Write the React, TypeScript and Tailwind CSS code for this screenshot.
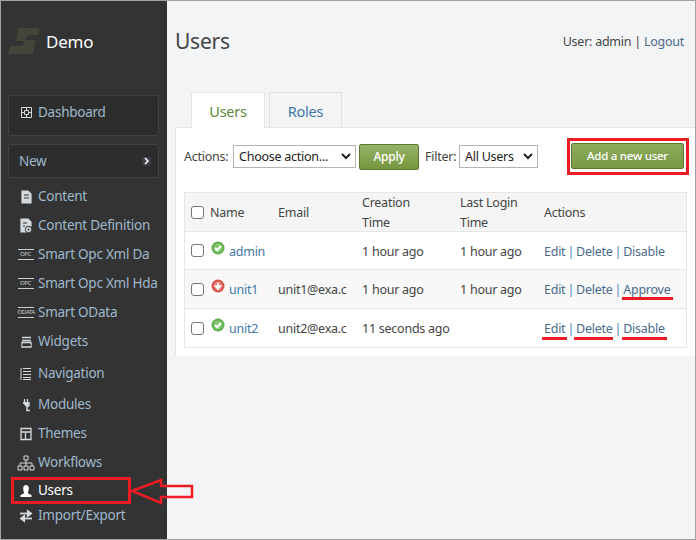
import { ReactNode } from 'react';

const Ico = ({ children }: { children: ReactNode }) => (
  <svg width="18" height="16" viewBox="0 0 18 16" fill="none" stroke="#d5dade" strokeWidth="1.2" className="shrink-0">
    {children}
  </svg>
);

const TagIcon = ({ label }: { label: string }) => (
  <span className="w-[16px] shrink-0 border-y border-[#c8ced2] text-[#c8ced2] text-[6px] leading-[9px] text-center whitespace-nowrap tracking-[-0.4px]">
    {label}
  </span>
);

const menu = [
  { label: 'Content', h: 'h-[29px]', icon: <Ico><path d="M5 2h6l3 3v9H5z" fill="#d5dade" /><path d="M7 6h5M7 9h5" stroke="#333" /></Ico> },
  { label: 'Content Definition', h: 'h-[29px]', icon: <Ico><path d="M4 1h7l3 3v4H9v6H4z" fill="#d5dade" /><circle cx="11.500" cy="11.500" r="3.200" fill="#d5dade" stroke="#333" strokeWidth="1" /><circle cx="11.500" cy="11.500" r="1" fill="#333" stroke="none" /><path d="M6 5h4M6 8h2" stroke="#333" /></Ico> },
  { label: 'Smart Opc Xml Da', h: 'h-[29px]', icon: <TagIcon label="OPC" /> },
  { label: 'Smart Opc Xml Hda', h: 'h-[29px]', icon: <TagIcon label="OPC" /> },
  { label: 'Smart OData', h: 'h-[29px]', icon: <TagIcon label="ODATA" /> },
  { label: 'Widgets', h: 'h-[29px]', icon: <Ico><path d="M5 3.500h9M5 6.500h9M5 8.500h9v4.500H5z" strokeWidth="1.300" /><path d="M5 11h9" stroke="#333" /></Ico> },
  { label: 'Navigation', h: 'h-[29px] mt-[3px]', icon: <Ico><path d="M4 2v12M6 2.500h8M6 5.500h8M6 8.500h8M6 11.500h8M6 13.500h8" strokeWidth="1" /></Ico> },
  { label: 'Modules', h: 'h-[29px] mt-[2px]', icon: <Ico><path d="M7.500 2v4M10.500 2v4" strokeWidth="1.300" /><path d="M6 6h6v2.500l-2 1.500v3.500h3" strokeWidth="1.500" /><path d="M7 6h4v3H9z" fill="#d5dade" /></Ico> },
  { label: 'Themes', h: 'h-[29px]', icon: <Ico><path d="M4 2.500h10v11H4zM4 6h10M8.500 6v7.500" strokeWidth="1.300" /></Ico> },
  { label: 'Workflows', h: 'h-[29px]', icon: <Ico><path d="M7 1h4v4H7zM1 11h4v4H1zM7 11h4v4H7zM13 11h4v4h-4zM9 5v6M3 11V8h12v3" strokeWidth="1" /></Ico> },
  { label: 'Users', h: 'h-[27px]', active: true, icon: <svg width="18" height="16" viewBox="0 0 18 16" className="shrink-0"><path d="M9 2c1.800 0 2.800 1.500 2.800 3.500S11 9 11 10.500l3.500 1.500v2h-11v-2L7 10.500C7 9 6.200 7.500 6.200 5.500S7.200 2 9 2z" fill="#fff" /></svg> },
  { label: 'Import/Export', h: 'h-[25px] -mt-[1px]', icon: <Ico><path d="M3 5.500h9" strokeWidth="1.800" /><path d="M10.500 2.500l4 3-4 3z" fill="#d5dade" /><path d="M15 10.500H6" strokeWidth="1.800" /><path d="M7.500 7.500l-4 3 4 3z" fill="#d5dade" /></Ico> },
];

const StatusIcon = ({ ok }: { ok: boolean }) => (
  <svg width="14" height="14" viewBox="0 0 14 14" className="shrink-0 -mt-[6px]">
    <circle cx="7" cy="7" r="6.500" fill={ok ? '#5fae4c' : '#d9534a'} />
    <circle cx="7" cy="7" r="4.500" fill={ok ? '#86c873' : '#ea8079'} />
    {ok ? (
      <path d="M4 7l2.200 2.200L10 5" stroke="#fff" strokeWidth="2" fill="none" />
    ) : (
      <path d="M7 3.500v4M4.500 7L7 10l2.500-3z" stroke="#fff" strokeWidth="1.600" fill="#fff" />
    )}
  </svg>
);

const Check = () => (
  <span className="w-[13px] h-[13px] shrink-0 rounded-[3px] border border-[#767676] bg-white" />
);

const Select = ({ label, w }: { label: string; w: string }) => (
  <div className={`${w} h-[23px] border border-[#b5b5b5] bg-white flex items-center justify-between pl-[5px] pr-[4px] text-[#222]`}>
    <span className="pt-[2px]">{label}</span>
    <svg width="10" height="7" viewBox="0 0 10 7"><path d="M1 1l4 4 4-4" stroke="#222" strokeWidth="2" fill="none" /></svg>
  </div>
);

const rows = [
  { name: 'admin', email: '', created: '1 hour ago', login: '1 hour ago', ok: true, last: 'Disable', h: 'h-[38px]', pad: 'pt-[4px]', bg: 'bg-white' },
  { name: 'unit1', email: 'unit1@exa.c', created: '1 hour ago', login: '1 hour ago', ok: false, last: 'Approve', h: 'h-[39px]', pad: 'pt-[2px]', bg: 'bg-[#f8f8f8]' },
  { name: 'unit2', email: 'unit2@exa.c', created: '11 seconds ago', login: '', ok: true, last: 'Disable', h: 'h-[38px]', pad: 'pt-[2px]', bg: 'bg-white' },
];

const Mark = ({ className }: { className: string }) => <div className={`absolute bg-[#ed1c24] h-[3px] ${className}`} />;

export default function App() {
  return (
    <div className="relative w-[696px] h-[540px] overflow-hidden flex border border-[#a3a3a3] bg-[#f3f4f6] text-[13.5px] tracking-[-0.25px] text-[#444] font-['Noto_Sans','Open_Sans',sans-serif]">
      {/* Sidebar */}
      <aside className="w-[166px] shrink-0 bg-[#333333] flex flex-col pl-[7px] pr-[8px]">
        <div className="h-[94px] pt-[27px] flex items-start">
          <svg width="33" height="27" viewBox="0 0 33 27" className="shrink-0">
            <path d="M10 0h22l-2 7H20l-3 5h11l-3 14H0l2-8h12l3-5H8z" fill="#44443a" />
          </svg>
          <span className="ml-[5px] mt-[1px] text-[17px] leading-[26px] text-white">Demo</span>
        </div>
        <div className="h-[41px] rounded-[2px] border border-[#414141] bg-[#2d2d2d] flex items-center pl-[12px] pb-[7px] text-[#9fb8cc]">
          <svg width="11" height="11" viewBox="0 0 11 11" fill="none" stroke="#d5dade" className="shrink-0"><path d="M.5.5h10v10H.5zM.5 5.500h3M7 5.500h3.500M5.500.5v3M5.500 7v3.500M3.500 3.500h4v4h-4z" /></svg>
          <span className="ml-[6px]">Dashboard</span>
        </div>
        <div className="mt-[8px] h-[34px] rounded-[2px] border border-[#414141] bg-[#2d2d2d] flex items-center justify-between pl-[10px] pr-[7px] text-[#9fb8cc]">
          <span className="pt-[1px]">New</span>
          <span className="w-[9px] h-[9px] rounded-[2px] bg-[#3d3d48] flex items-center justify-center">
            <svg width="6" height="8" viewBox="0 0 6 8"><path d="M1 1l3 3-3 3" stroke="#fff" strokeWidth="1.500" fill="none" /></svg>
          </span>
        </div>
        <nav className="mt-[4px] flex flex-col">
          {menu.map(m => (
            <div key={m.label} className={`${m.h} flex items-center gap-[4px] pl-[9px] whitespace-nowrap ${m.active ? 'text-white' : 'text-[#9fb8cc]'}`}>
              <span className="w-[17px] flex justify-center shrink-0">{m.icon}</span>
              <span>{m.label}</span>
            </div>
          ))}
        </nav>
      </aside>

      {/* Main */}
      <main className="flex-1 min-w-0 flex flex-col pl-[8px]">
        <header className="h-[91px] flex items-start justify-between pr-[11px]">
          <h1 className="mt-[24px] text-[21px] leading-[32px] text-[#444]">Users</h1>
          <div className="mt-[32px] text-[12.5px] leading-[18px]">
            User: admin | <span className="text-[#4a6a8a]">Logout</span>
          </div>
        </header>
        <div className="flex pl-[16px] gap-[4px] h-[35px] relative z-10">
          <div className="w-[74px] h-[36px] bg-white border border-b-0 border-[#e6e6e6] flex items-center justify-center pt-[3px] text-[14.5px] text-[#5a8a3a]">Users</div>
          <div className="w-[73px] h-[35px] bg-[#f3f4f6] border border-b-0 border-[#e0e0e0] flex items-center justify-center pt-[3px] text-[14.5px] text-[#3f78a5]">Roles</div>
        </div>
        <section className="h-[229px] bg-white border-t border-l border-[#e6e6e6] pl-[8px] pr-[8px]">
          <div className="h-[65px] flex items-start text-[12.5px]">
            <div className="mt-[17px] flex items-center h-[23px]">
              <span className="w-[49px] pt-[2px]">Actions:</span>
              <Select label="Choose action..." w="w-[123px]" />
              <button className="ml-[3px] w-[60px] h-[26px] rounded-[2px] border border-[#5c7a30] bg-linear-to-b from-[#96b466] to-[#76963f] text-white font-medium text-[12px]">Apply</button>
              <span className="ml-[6px] w-[34px] pt-[2px]">Filter:</span>
              <Select label="All Users" w="w-[79px]" />
            </div>
            <button className="ml-auto mt-[15px] mr-[3px] w-[113px] h-[26px] rounded-[2px] border border-[#5c7a30] bg-linear-to-b from-[#8dab5c] to-[#7a9a45] text-white font-medium text-[11.5px]">Add a new user</button>
          </div>
          <div className="border border-[#e6e6e6] text-[12.5px] -mt-[1px]">
            <div className="h-[39px] bg-[#f5f5f5] border-b border-[#e6e6e6] flex items-center leading-[20px]">
              <div className="w-[85px] pl-[6px] flex items-center gap-[6px]"><Check /><span className="pt-[2px]">Name</span></div>
              <div className="w-[84px] pl-[8px] pt-[2px]">Email</div>
              <div className="w-[98px] pl-[8px] pt-[2px]">Creation<br />Time</div>
              <div className="w-[84px] pl-[8px] pt-[2px]">Last Login<br />Time</div>
              <div className="pl-[8px] pt-[2px]">Actions</div>
            </div>
            {rows.map(r => (
              <div key={r.name} className={`${r.h} ${r.bg} border-b last:border-b-0 border-[#e6e6e6] flex items-center`}>
                <div className="w-[85px] pl-[6px] flex items-center">
                  <Check />
                  <span className="ml-[7px] flex"><StatusIcon ok={r.ok} /></span>
                  <span className={`ml-[4px] ${r.pad} text-[#3f78a5]`}>{r.name}</span>
                </div>
                <div className={`w-[84px] pl-[8px] ${r.pad} overflow-hidden whitespace-nowrap pr-[4px]`}>{r.email}</div>
                <div className={`w-[98px] pl-[8px] ${r.pad} whitespace-nowrap`}>{r.created}</div>
                <div className={`w-[84px] pl-[8px] ${r.pad} whitespace-nowrap`}>{r.login}</div>
                <div className={`pl-[8px] ${r.pad} whitespace-nowrap text-[#4a6a8a] [word-spacing:-1px]`}>
                  Edit <span className="text-[#4a86b8]">|</span> Delete <span className="text-[#4a86b8]">|</span> {r.last}
                </div>
              </div>
            ))}
          </div>
        </section>
      </main>

      {/* Annotations drawn over the screenshot */}
      <div className="absolute left-[10px] top-[476px] w-[120px] h-[27px] border-[3px] border-[#ed1c24]" />
      <div className="absolute left-[566px] top-[137px] w-[122px] h-[37px] border-[3px] border-[#ed1c24]" />
      <Mark className="left-[200px] top-[121px] w-[58px]" />
      <Mark className="left-[273px] top-[121px] w-[56px]" />
      <Mark className="left-[621px] top-[296px] w-[51px]" />
      <Mark className="left-[541px] top-[336px] w-[25px]" />
      <Mark className="left-[573px] top-[336px] w-[39px]" />
      <Mark className="left-[621px] top-[336px] w-[45px]" />
      <svg className="absolute left-[129px] top-[477px]" width="64" height="28" viewBox="0 0 64 28" fill="none">
        <path d="M2 13L31 2v6h31v11H31v6z" stroke="#ed1c24" strokeWidth="2.500" />
      </svg>
    </div>
  );
}
